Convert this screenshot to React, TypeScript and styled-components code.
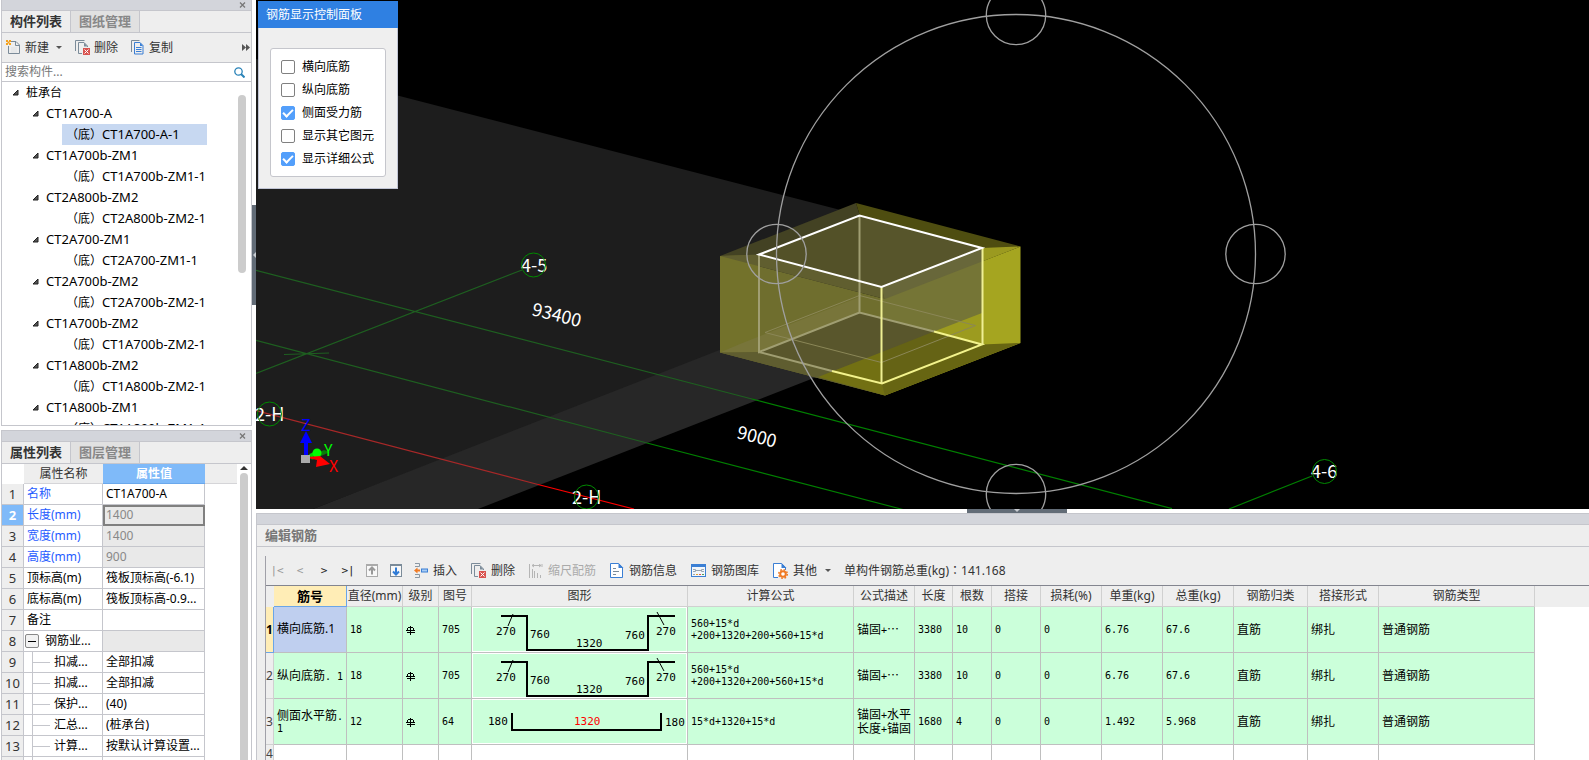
import React, { useState } from "react";
import styled, { createGlobalStyle, css } from "styled-components";

const GlobalStyle = createGlobalStyle`
  * { box-sizing: border-box; }
  html, body, #root { height: 100%; }
  body {
    margin: 0;
    overflow: hidden;
    background: #fff;
    color: #000;
    font: 12px/20px "Noto Sans", "Noto Sans CJK SC", sans-serif;
  }
  button, input { font: inherit; color: inherit; }
  button { border: 0; padding: 0; background: none; white-space: nowrap; }
  svg { display: block; flex: none; }
  table { border-collapse: separate; border-spacing: 0; table-layout: fixed; }
  td, th { padding: 0; font-weight: 400; }
`;

const line = "#c5c6cc";

/* ---------- page frame ---------- */

const Page = styled.div`
  height: 100vh;
  display: flex;
`;

const Sidebar = styled.div`
  flex: none;
  width: 252px;
  padding-left: 1px;
  display: flex;
  flex-direction: column;
  gap: 4px;
`;

const Main = styled.div`
  flex: 1;
  min-width: 0;
  display: flex;
  flex-direction: column;
`;

const ViewRow = styled.div`
  flex: 1;
  min-height: 0;
  display: flex;
`;

const VSplitter = styled.div`
  flex: none;
  width: 4px;
  display: flex;
  flex-direction: column;
  justify-content: center;
`;

const VHandle = styled.div`
  height: 100px;
  background: #626c77;
  display: flex;
  align-items: center;
`;

const HSplitter = styled.div`
  flex: none;
  height: 4px;
  margin-left: 4px;
  display: grid;
  grid-template-columns: 15fr 100px 11fr;
`;

const HHandle = styled.div`
  grid-column: 2;
  background: #626c77;
  display: flex;
  justify-content: center;
`;

/* ---------- docked panels ---------- */

const Panel = styled.section<{ $grow?: boolean }>`
  flex: ${(p) => (p.$grow ? "1" : "none")};
  height: ${(p) => (p.$grow ? "auto" : "330px")};
  min-height: 0;
  border: 1px solid ${line};
  border-top-width: ${(p) => (p.$grow ? "0" : "1px")};
  border-bottom-width: ${(p) => (p.$grow ? "1px" : "0")};
  display: flex;
  flex-direction: column;
`;

const TitleBar = styled.div`
  flex: none;
  height: 11px;
  background: #d3d5db;
  border-bottom: 1px solid ${line};
  display: flex;
  align-items: center;
  justify-content: flex-end;
  padding-right: 5px;
`;

const TabBar = styled.div`
  flex: none;
  height: 22px;
  background: #eee;
  border-bottom: 1px solid ${line};
  display: flex;
`;

const Tab = styled.button<{ $active?: boolean }>`
  width: 69px;
  padding-bottom: 2px;
  border-right: 1px solid ${line};
  background: ${(p) => (p.$active ? "#eee" : "#e1e1e1")};
  color: ${(p) => (p.$active ? "#333" : "#888")};
  font-size: 13px;
  font-weight: 700;
`;

const PanelTools = styled.div`
  flex: none;
  height: 30px;
  padding: 0 1px 0 4px;
  background: #eee;
  border-bottom: 1px solid ${line};
  display: flex;
  align-items: center;
  gap: 13px;
`;

const ToolButton = styled.button<{ $muted?: boolean; $tight?: boolean }>`
  display: flex;
  align-items: center;
  gap: ${(p) => (p.$tight ? 4 : 5)}px;
  color: ${(p) => (p.$muted ? "#aaa" : "#333")};
`;

const Caret = styled.span`
  margin-left: 3px;
  border: 3px solid transparent;
  border-top-color: #555;
  border-bottom-width: 0;
`;

const MoreButton = styled(ToolButton)`
  margin-left: auto;
`;

const SearchRow = styled.label`
  flex: none;
  height: 19px;
  padding: 0 6px 0 3px;
  border-bottom: 1px solid ${line};
  display: flex;
  align-items: center;
`;

const SearchInput = styled.input`
  flex: 1;
  min-width: 0;
  height: 18px;
  padding: 0;
  border: 0;
  outline: 0;
  background: transparent;
  &::placeholder { color: #777; opacity: 1; }
`;

const TreeArea = styled.div`
  flex: 1;
  min-height: 0;
  display: flex;
  overflow: hidden;
`;

const Tree = styled.ul`
  flex: 1;
  margin: 0;
  padding: 0;
  list-style: none;
`;

const TreeRow = styled.li<{ $level: number }>`
  height: 21px;
  line-height: 21px;
  font-size: ${(p) => (p.$level === 0 ? 12 : 13)}px;
  display: flex;
  align-items: center;
  padding-left: ${(p) => [10, 30, 60][p.$level]}px;
  gap: 6px;
  white-space: nowrap;
`;

const Leaf = styled.span<{ $selected?: boolean }>`
  width: 145px;
  height: 21px;
  line-height: 19px;
  padding-left: 4px;
  background: ${(p) => (p.$selected ? "#c7d8f1" : "transparent")};
`;

const TreeTrack = styled.div`
  flex: none;
  width: 13px;
  padding-top: 13px;
`;

const TreeThumb = styled.div`
  width: 8px;
  height: 178px;
  border-radius: 4px;
  background: #ccc;
`;

/* ---------- property table ---------- */

const PropArea = styled.div`
  flex: 1;
  min-height: 0;
  display: flex;
  overflow: hidden;
`;

const PropTable = styled.table`
  width: 235px;
  flex: none;
  align-self: flex-start;
`;

const PropHead = styled.th<{ $selected?: boolean; $blank?: boolean }>`
  height: 20px;
  line-height: 19px;
  font-size: 12px;
  background: ${(p) => (p.$selected ? "#7fbaf9" : p.$blank ? "#fff" : "#eee")};
  color: ${(p) => (p.$selected ? "#fff" : "#333")};
  font-weight: ${(p) => (p.$selected ? 700 : 400)};
  border-bottom: 1px solid ${(p) => (p.$selected ? "#6aa8ec" : p.$blank ? "#fff" : "#d5d5d8")};
`;

const PropNumber = styled.th<{ $selected?: boolean }>`
  height: 21px;
  line-height: 20px;
  font-size: 13px;
  background: ${(p) => (p.$selected ? "#7fbaf9" : "#eee")};
  color: ${(p) => (p.$selected ? "#fff" : "#333")};
  font-weight: ${(p) => (p.$selected ? 700 : 400)};
  border-right: 1px solid ${line};
  border-bottom: 1px solid ${line};
`;

const PropCell = styled.td<{ $color?: string; $fill?: string; $focus?: boolean }>`
  height: 21px;
  line-height: 20px;
  padding-left: 3px;
  color: ${(p) => p.$color ?? "#000"};
  background: ${(p) => p.$fill ?? "#fff"};
  border-right: 1px solid ${line};
  border-bottom: 1px solid ${line};
  white-space: nowrap;
  overflow: hidden;
  ${(p) => p.$focus && css`outline: 2px solid #808080; outline-offset: -2px;`}
`;

const PropLabel = styled.div`
  display: flex;
  align-items: center;
  gap: 4px;
  height: 20px;
`;

const Expander = styled.button`
  width: 14px;
  height: 14px;
  margin-left: -2px;
  margin-right: 2px;
  border: 1px solid #888;
  border-radius: 2px;
  background: #f2f2f2;
  display: flex;
  align-items: center;
  justify-content: center;
  &::after { content: ""; width: 8px; height: 1px; background: #000; }
`;

const Guide = styled.span`
  width: 18px;
  height: 20px;
  margin-left: 5px;
  border-left: 1px solid ${line};
  display: flex;
  align-items: center;
  &::after { content: ""; flex: 1; height: 1px; background: ${line}; }
`;

const PropTrack = styled.div`
  flex: 1;
  padding: 2px 0 0 2px;
  display: flex;
  flex-direction: column;
  gap: 3px;
`;

const PropThumb = styled.div`
  flex: 1;
  width: 8px;
  margin-left: 1px;
  border-radius: 4px 4px 0 0;
  background: #ccc;
`;

/* ---------- 3D view ---------- */

const Viewport = styled.div`
  flex: 1;
  min-width: 0;
  position: relative;
  background: #000;
  overflow: hidden;
`;

const Scene = styled.svg`
  width: 100%;
  height: 100%;
`;

const Dialog = styled.form`
  position: absolute;
  left: 2px;
  top: 1px;
  width: 140px;
  background: #efefef;
  border: 1px solid #c0c4d4;
  border-top: 0;
`;

const DialogTitle = styled.div`
  height: 27px;
  margin: 0 -1px;
  padding-left: 8px;
  line-height: 27px;
  color: #fff;
  background: #2f80e2;
`;

const CheckGroup = styled.div`
  margin: 20px 11px 11px;
  padding: 6px 0 6px 10px;
  background: #fff;
  border: 1px solid ${line};
  border-radius: 3px;
`;

const CheckRow = styled.label`
  height: 23px;
  display: flex;
  align-items: center;
  gap: 7px;
`;

const Check = styled.input`
  appearance: none;
  width: 14px;
  height: 14px;
  margin: 0;
  border: 1px solid #808080;
  border-radius: 2px;
  background: #fff;
  display: grid;
  place-items: center;
  &:checked { background: #539ffb; border-color: #539ffb; }
  &:checked::after {
    content: "";
    width: 8px;
    height: 4px;
    border-left: 2px solid #fff;
    border-bottom: 2px solid #fff;
    transform: translateY(-1px) rotate(-45deg);
  }
`;

/* ---------- rebar editor ---------- */

const Editor = styled.section`
  flex: none;
  height: 247px;
  margin-left: 4px;
  border-top: 1px solid ${line};
  border-left: 1px solid ${line};
  background: #eee;
  display: flex;
  flex-direction: column;
  overflow: hidden;
`;

const EditorTitle = styled.h2`
  flex: none;
  height: 22px;
  margin: 0;
  padding-left: 8px;
  border-bottom: 1px solid ${line};
  font-size: 13px;
  line-height: 20px;
  font-weight: 700;
  color: #777;
`;

const EditorBody = styled.div`
  flex: 1;
  min-height: 0;
  margin: 9px 0 0 8px;
  border-left: 1px solid #a0a0a8;
`;

const EditorTools = styled.div`
  height: 29px;
  display: flex;
  align-items: center;
  gap: 14px;
  color: #333;
`;

const NavGroup = styled.div`
  display: flex;
  width: 134px;
`;

const NavButton = styled.button<{ $muted?: boolean }>`
  flex: none;
  width: 24px;
  height: 20px;
  font: 11px/20px "DejaVu Sans Mono", monospace;
  color: ${(p) => (p.$muted ? "#999" : "#222")};
  display: flex;
  align-items: center;
  justify-content: center;
  &:first-child { width: 22px; }
`;

const Total = styled.span`
  margin-left: -1px;
`;

const Colon = styled.span`
  font-family: "Noto Sans CJK TC", sans-serif;
`;

const Sheet = styled.table`
  width: 100%;
  border-top: 1px solid #83858f;
  background: #fff;
`;

const SheetHead = styled.th<{ $selected?: boolean; $plain?: boolean }>`
  height: 21px;
  line-height: 20px;
  white-space: nowrap;
  background: ${(p) => (p.$selected ? "#ffedb6" : "#eee")};
  color: ${(p) => (p.$selected ? "#000" : "#333")};
  font-size: ${(p) => (p.$selected ? 13 : 12)}px;
  font-weight: ${(p) => (p.$selected ? 700 : 400)};
  border-bottom: 1px solid ${(p) => (p.$selected ? "#6aa5e8" : p.$plain ? "#eee" : "#d0d0d0")};
  border-right: 1px solid ${(p) => (p.$selected ? "#6aa5e8" : p.$plain ? "#eee" : "#d0d0d0")};
`;

const RowNumber = styled.th<{ $selected?: boolean }>`
  line-height: 18px;
  text-align: left;
  background: ${(p) => (p.$selected ? "#ffedb6" : "#eee")};
  color: ${(p) => (p.$selected ? "#000" : "#444")};
  font-weight: ${(p) => (p.$selected ? 700 : 400)};
  border-right: 1px solid ${(p) => (p.$selected ? "#6aa5e8" : "#d0d0d0")};
  border-bottom: 1px solid ${(p) => (p.$selected ? "#6aa5e8" : "#d0d0d0")};
`;

const SheetCell = styled.td<{ $tone?: "name" | "shape" | "empty" | "filler" }>`
  height: ${(p) => (p.$tone === "empty" || p.$tone === "filler" ? 18 : 46)}px;
  padding: 0 0 0 3px;
  font: 10px/12px "DejaVu Sans Mono", "Noto Sans CJK SC", monospace;
  background: #cbffda;
  border-right: 1px solid #bfbfbf;
  border-bottom: 1px solid #bfbfbf;
  ${(p) => p.$tone === "name" && css`background: #bfcfef;`}
  ${(p) => p.$tone === "shape" && css`background: #fff; padding: 1px;`}
  ${(p) => p.$tone === "empty" && css`background: #fff;`}
  ${(p) => p.$tone === "filler" && css`background: #fff; border: 0;`}
`;

const Han = styled.span<{ $ui?: boolean }>`
  font-size: 12px;
  font-family: ${(p) => (p.$ui ? '"Noto Sans", ' : "")}"Noto Sans CJK SC", sans-serif;
`;

const ShapeSvg = styled.svg`
  width: 100%;
  height: 43px;
  background: #cbffda;
  font: 11px "DejaVu Sans Mono", monospace;
`;

/* ---------- icons ---------- */

const CloseIcon = () => (
  <svg width="7" height="6" viewBox="0 0 7 6"><path d="M1 .5 6 5.5M6 .5 1 5.5" stroke="#777" strokeWidth="1.3" /></svg>
);

const NewIcon = () => (
  <svg width="15" height="15" viewBox="0 0 15 15" fill="none">
    <path d="M5 1.500h5l3.500 3.500v8.500h-11V6" stroke="#7b8b99" />
    <path d="M9.500 1.500v4h4" stroke="#7b8b99" />
    <path d="M5 8h6M5 10h6M5 12h6" stroke="#dde1e4" />
    <path d="M0 0h2v2H0zM3 0h2v2H3zM1.500 1.500h2v2h-2zM0 3h2v2H0zM3 3h2v2H3z" fill="#f5a21d" />
  </svg>
);

const DeleteIcon = () => (
  <svg width="15" height="15" viewBox="0 0 15 15" fill="none">
    <path d="M.5 11V.5h9" stroke="#7b8b99" />
    <path d="M7 13.500H3.500v-11H9l3.500 3.500v1" stroke="#7b8b99" />
    <path d="M9 2.500v4h3.500z" fill="#7b8b99" />
    <rect x="8" y="8" width="7" height="7" fill="#d9534f" />
    <path d="m9.500 9.500 4 4m0-4-4 4" stroke="#fff" />
  </svg>
);

const CopyIcon = () => (
  <svg width="13" height="15" viewBox="0 0 13 15" fill="none">
    <path d="M.5 12V.5h8" stroke="#7b8b99" />
    <path d="M3.500 2.500H9l3 3v8.500H3.500z" stroke="#3b7fd4" />
    <path d="M9 2.500v3.500h3z" fill="#3b7fd4" />
    <path d="M5 7.500h5.500M5 9.500h5.500M5 11.500h5.500" stroke="#3b7fd4" />
  </svg>
);

const MoreIcon = () => (
  <svg width="8" height="7" viewBox="0 0 8 7" fill="#555"><path d="M0 0 4 3.500 0 7zM4 0l4 3.500L4 7z" /></svg>
);

const SearchIcon = () => (
  <svg width="11" height="11" viewBox="0 0 11 11" fill="none" stroke="#2a83b8">
    <circle cx="4.500" cy="4.500" r="3.700" strokeWidth="1.300" /><path d="m7 7 3.500 3.500" strokeWidth="2" />
  </svg>
);

const Twisty = () => (
  <svg width="8" height="8" viewBox="0 0 8 8"><path d="M6 1v5H1z" fill="#555" stroke="#222" /></svg>
);

const MoveIcon = ({ down }: { down?: boolean }) => (
  <svg width="12" height="13" viewBox="0 0 12 13" fill="none">
    <rect x=".5" y=".5" width="11" height="12" stroke={down ? "#7b8b99" : "#aaa"} fill="#f8f8f8" />
    <path d="M0 1h12" stroke={down ? "#7b8b99" : "#aaa"} strokeWidth="2" />
    <path
      d={down ? "M6 3.500v7M3 7.500l3 3 3-3" : "M6 10.500v-7M3 6.500l3-3 3 3"}
      stroke={down ? "#2f7bd6" : "#999"}
      strokeWidth="2"
    />
  </svg>
);

const InsertIcon = () => (
  <svg width="14" height="15" viewBox="0 0 14 15" fill="none">
    <path d="M1 .5h4.500v3H1M1 11.500h4.500v3H1" stroke="#8a97a3" />
    <path d="m0 7.500 3.500-3v2H6v2H3.500v2z" fill="#f07a24" />
    <rect x="7.500" y="6" width="6" height="3" fill="#a9cdf5" stroke="#3b7fd4" />
  </svg>
);

const ScaleIcon = () => (
  <svg width="14" height="14" viewBox="0 0 14 14" fill="none" stroke="#b5b5b5">
    <path d="M.5 0v14M3 1.500h9M5 0 3 1.500 5 3M10 0l2 1.500L10 3M13 0v3" />
    <path d="M3.500 5v9M5.500 7v7M8.500 9v5M11.500 11v3" />
  </svg>
);

const InfoIcon = () => (
  <svg width="14" height="15" viewBox="0 0 14 15" fill="none">
    <path d="M.5.500h8l4 4v10H.5z" fill="#fff" stroke="#3b7fd4" />
    <path d="M8.500 0v5h5z" fill="#3b7fd4" />
    <path d="M3 5.500h3M3 8.500h6M3 11.500h3" stroke="#7b8b99" />
  </svg>
);

const GalleryIcon = () => (
  <svg width="15" height="13" viewBox="0 0 15 13" fill="none">
    <rect x=".5" y=".5" width="14" height="12" fill="#f2f6fa" stroke="#3b7fd4" />
    <path d="M0 1.500h15" stroke="#3b7fd4" strokeWidth="3" />
    <path d="M2 5.500h2.500v2H2M5 6.500h5M13 5.500h-2.500v2H13" stroke="#9aa5b0" />
    <path d="M2 10.500h2" stroke="#9aa5b0" /><path d="M5 10.500h2" stroke="#e0a030" />
    <path d="M8 10.500h2" stroke="#e05050" /><path d="M11 10.500h2" stroke="#50a050" />
  </svg>
);

const OtherIcon = () => (
  <svg width="15" height="16" viewBox="0 0 15 16" fill="none">
    <path d="M5 14.500H.5V.500h8l4 4V7" fill="#fff" stroke="#3b7fd4" />
    <path d="M8.500 0v5h5z" fill="#3b7fd4" />
    <circle cx="10" cy="11" r="4.300" stroke="#f07a24" strokeWidth="1.500" strokeDasharray="1.700 1.680" />
    <circle cx="10" cy="11" r="2.800" stroke="#f07a24" strokeWidth="2" fill="#fff" />
  </svg>
);

const GradeIcon = () => (
  <svg width="10" height="10" viewBox="0 0 10 10" fill="none" stroke="#000">
    <path d="M4.500 1v9M2 2.500h5M1.500 3v3M7.500 3v3M0 5.500h9M1 7.500h8" />
  </svg>
);

/* ---------- data ---------- */

const components: [string, string][] = [
  ["CT1A700-A", "CT1A700-A-1"],
  ["CT1A700b-ZM1", "CT1A700b-ZM1-1"],
  ["CT2A800b-ZM2", "CT2A800b-ZM2-1"],
  ["CT2A700-ZM1", "CT2A700-ZM1-1"],
  ["CT2A700b-ZM2", "CT2A700b-ZM2-1"],
  ["CT1A700b-ZM2", "CT1A700b-ZM2-1"],
  ["CT1A800b-ZM2", "CT1A800b-ZM2-1"],
  ["CT1A800b-ZM1", "CT1A800b-ZM1-1"],
];

type Prop = { name: string; value: string; kind?: "key" | "locked" | "group" | "child" };

const props: Prop[] = [
  { name: "名称", value: "CT1A700-A", kind: "key" },
  { name: "长度(mm)", value: "1400", kind: "locked" },
  { name: "宽度(mm)", value: "1400", kind: "locked" },
  { name: "高度(mm)", value: "900", kind: "locked" },
  { name: "顶标高(m)", value: "筏板顶标高(-6.1)" },
  { name: "底标高(m)", value: "筏板顶标高-0.9..." },
  { name: "备注", value: "" },
  { name: "钢筋业...", value: "", kind: "group" },
  { name: "扣减...", value: "全部扣减", kind: "child" },
  { name: "扣减...", value: "全部扣减", kind: "child" },
  { name: "保护...", value: "(40)", kind: "child" },
  { name: "汇总...", value: "(桩承台)", kind: "child" },
  { name: "计算...", value: "按默认计算设置...", kind: "child" },
];

const columns: [string, number][] = [
  ["筋号", 73], ["直径(mm)", 56], ["级别", 36], ["图号", 33], ["图形", 216], ["计算公式", 166],
  ["公式描述", 61], ["长度", 38], ["根数", 39], ["搭接", 49], ["损耗(%)", 61], ["单重(kg)", 61],
  ["总重(kg)", 71], ["钢筋归类", 74], ["搭接形式", 71], ["钢筋类型", 156],
];

const HookShape = () => (
  <ShapeSvg viewBox="0 0 213 43" preserveAspectRatio="xMidYMid meet">
    <path d="M28 8h26v34h121V8h27" fill="none" stroke="#000" strokeWidth="2" />
    <path d="m40 6-5 12M184 4l7 13" stroke="#000" />
    <text x="23" y="27">270</text>
    <text x="57" y="30">760</text>
    <text x="103" y="39">1320</text>
    <text x="152" y="31">760</text>
    <text x="183" y="27">270</text>
  </ShapeSvg>
);

const TrayShape = () => (
  <ShapeSvg viewBox="0 0 213 43" preserveAspectRatio="xMidYMid meet">
    <path d="M39 13v17h149V13" fill="none" stroke="#000" strokeWidth="2" />
    <text x="15" y="25">180</text>
    <text x="101" y="25" fill="#f00">1320</text>
    <text x="192" y="26">180</text>
  </ShapeSvg>
);

const rebars = [
  {
    name: <Han $ui>横向底筋.1</Han>, dia: "18", no: "705", shape: <HookShape />,
    formula: <>560+15*d<br />+200+1320+200+560+15*d</>, note: <><Han>锚固</Han>+<Han>…</Han></>,
    len: "3380", count: "10", unit: "6.76", total: "67.6",
  },
  {
    name: <><Han>纵向底筋</Han>. 1</>, dia: "18", no: "705", shape: <HookShape />,
    formula: <>560+15*d<br />+200+1320+200+560+15*d</>, note: <><Han>锚固</Han>+<Han>…</Han></>,
    len: "3380", count: "10", unit: "6.76", total: "67.6",
  },
  {
    name: <><Han>侧面水平筋</Han>.<br />1</>, dia: "12", no: "64", shape: <TrayShape />,
    formula: <>15*d+1320+15*d</>, note: <><Han>锚固</Han>+<Han>水平</Han><br /><Han>长度</Han>+<Han>锚固</Han></>,
    len: "1680", count: "4", unit: "1.492", total: "5.968",
  },
];

/* ---------- parts ---------- */

const ComponentPanel = () => (
  <Panel $grow>
    <TitleBar><CloseIcon /></TitleBar>
    <TabBar>
      <Tab $active>构件列表</Tab>
      <Tab>图纸管理</Tab>
    </TabBar>
    <PanelTools>
      <ToolButton $tight><NewIcon />新建<Caret /></ToolButton>
      <ToolButton $tight><DeleteIcon />删除</ToolButton>
      <ToolButton><CopyIcon />复制</ToolButton>
      <MoreButton aria-label="更多"><MoreIcon /></MoreButton>
    </PanelTools>
    <SearchRow>
      <SearchInput placeholder="搜索构件..." aria-label="搜索构件" />
      <SearchIcon />
    </SearchRow>
    <TreeArea>
      <Tree>
        <TreeRow $level={0}><Twisty />桩承台</TreeRow>
        {components.map(([parent, leaf], i) => (
          <React.Fragment key={leaf}>
            <TreeRow $level={1}><Twisty />{parent}</TreeRow>
            <TreeRow $level={2}>
              <Leaf $selected={i === 0}><Han>（底）</Han>{leaf}</Leaf>
            </TreeRow>
          </React.Fragment>
        ))}
      </Tree>
      <TreeTrack><TreeThumb /></TreeTrack>
    </TreeArea>
  </Panel>
);

const PropertyPanel = () => (
  <Panel>
    <TitleBar><CloseIcon /></TitleBar>
    <TabBar>
      <Tab $active>属性列表</Tab>
      <Tab>图层管理</Tab>
    </TabBar>
    <PropArea>
      <PropTable>
        <colgroup>
          <col width="22" /><col width="79" /><col width="102" /><col width="32" />
        </colgroup>
        <thead>
          <tr>
            <PropHead $blank />
            <PropHead>属性名称</PropHead>
            <PropHead $selected>属性值</PropHead>
            <PropHead />
          </tr>
        </thead>
        <tbody>
          {props.map((p, i) => (
            <tr key={i}>
              <PropNumber $selected={i === 1}>{i + 1}</PropNumber>
              <PropCell $color={p.kind === "key" || p.kind === "locked" ? "#1f5cff" : undefined}>
                <PropLabel>
                  {p.kind === "group" && <Expander aria-label="折叠" />}
                  {p.kind === "child" && <Guide />}
                  {p.name}
                </PropLabel>
              </PropCell>
              <PropCell
                $color={p.kind === "locked" ? "#888" : undefined}
                $fill={p.kind === "locked" || p.kind === "group" ? "#e9e9e9" : undefined}
                $focus={i === 1}
              >
                {p.value}
              </PropCell>
            </tr>
          ))}
          <tr>
            <PropNumber />
            <PropCell><PropLabel><Guide /></PropLabel></PropCell>
            <PropCell />
          </tr>
        </tbody>
      </PropTable>
      <PropTrack>
        <svg width="10" height="4" viewBox="0 0 10 4"><path d="M1 4 5 0l4 4z" fill="#333" /></svg>
        <PropThumb />
      </PropTrack>
    </PropArea>
  </Panel>
);

const checks: [string, boolean][] = [
  ["横向底筋", false], ["纵向底筋", false], ["侧面受力筋", true], ["显示其它图元", false], ["显示详细公式", true],
];

const DisplayDialog = () => {
  const [state, setState] = useState(checks.map((c) => c[1]));
  return (
    <Dialog>
      <DialogTitle>钢筋显示控制面板</DialogTitle>
      <CheckGroup>
        {checks.map(([label], i) => (
          <CheckRow key={label}>
            <Check
              type="checkbox"
              checked={state[i]}
              onChange={() => setState(state.map((v, j) => (j === i ? !v : v)))}
            />
            {label}
          </CheckRow>
        ))}
      </CheckGroup>
    </Dialog>
  );
};

const ModelScene = () => (
  <Scene viewBox="256 0 1333 509" preserveAspectRatio="xMinYMin slice" fill="none">
    {/* slab planes */}
    <path d="M256 59 856 214V300L313 509H256z" fill="#1d1d1d" />
    <path d="M313 509 740 342 860 360 478 509z" fill="#272727" />

    {/* axis grid */}
    <g stroke="#1e5f20" strokeWidth="1.200">
      <path d="M256 270.300 752 399M256 340.300 647 443M256 373.500 522 270M284 354.500 329 353" />
      <path d="M752 399 1172 508.600M647 443 903 509.500M1229 509 1312 476" stroke="#008000" />
    </g>
    <path d="M256 410.700 538 484.500" stroke="#a82828" strokeWidth="1.200" />
    <path d="M538 484.500 634 509" stroke="#f00" strokeWidth="1.200" />

    {/* foundation volume */}
    <path d="M720 256 856 203 860 216 885 299z" fill="#434223" />
    <path d="M856 203 1020.500 246.500 885 299 860 216z" fill="#4e4d10" />
    <path d="M720 256 885 299V395.500L720 352.500z" fill="#6f6e2e" />
    <path d="M720 256 759 255V352L720 352.500z" fill="#73722b" />
    <path d="M885 299 1020.500 246.500V343L885 395.500z" fill="#a5a520" />
    <path d="M882 287 982 248V344L882 383z" fill="#757536" />
    <path d="M759 254.500 859.500 215.500 982 248 882 287z" fill="#535128" />
    <path d="M859.500 215.500 982 248 882 287 859.500 281z" fill="#57552b" />
    <path d="M720 256 759 254.500 882 287 885 299z" fill="#605e2f" />
    <path d="M882 287 982 248V261.500L885 299z" fill="#68673a" />
    <path d="M982 248 1020.500 246.500 982 261.500z" fill="#9b9a20" />
    <path d="M720 352.500 740 344 859.500 297 859.500 313 759 352z" fill="#78753a" />
    <path d="M759 352 859.500 312.500 982 344.500 882 383.500z" fill="#59562c" />
    <path d="M720 352.500 759 352 882 383.500 885 395.500z" fill="#5f5d30" />
    <path d="M934 331.500 982 313V344z" fill="#9c9b1f" />
    <path d="M818 377 882 352V383.500L885 395.500z" fill="#727013" />
    <path d="M882 352 934 331.500 982 344.500 882 383.500z" fill="#656315" />
    <path d="M882 383.500 982 344.500 1020.500 343 885 395.500z" fill="#676512" />
    <path d="M765 332.500 859.500 295.500 975.500 325.500 881.500 362.500z" stroke="#8b8757" />
    <g strokeWidth="2">
      <path d="M859.500 215.500V312.500M759 254.500V352L859.500 312.500 934 331.500M759 352 832 371" stroke="#a09e72" />
      <path d="M832 371 882 383.500 982 344.500 934 331.500" stroke="#f3f38c" />
      <path d="M881.500 287V383.500M982.500 248V344.500" stroke="#efef94" />
      <path d="M759 254.500 859.500 215.500 982 248 881.500 287z" stroke="#fff" />
    </g>

    {/* orbit rings */}
    <g stroke="#a0a0a0" strokeWidth="1.300">
      <circle cx="1016" cy="254" r="239.500" />
      <circle cx="776.500" cy="254" r="29.700" /><circle cx="1255.500" cy="254" r="29.700" />
      <circle cx="1016" cy="15" r="29.700" /><circle cx="1016" cy="494" r="29.700" />
    </g>

    {/* labels */}
    <g fill="#fff" fontFamily='"Noto Sans CJK SC", sans-serif' fontSize="18">
      <text x="521" y="272">4-5</text>
      <text x="255" y="421">2-H</text>
      <text x="572" y="504">2-H</text>
      <text x="1311" y="478">4-6</text>
      <text transform="translate(531 315) rotate(14)">93400</text>
      <text transform="translate(736 438) rotate(14)">9000</text>
    </g>
    <g stroke="#008a00">
      <circle cx="533.500" cy="265" r="12" /><circle cx="269.500" cy="414" r="12" />
      <circle cx="586.500" cy="497" r="12" /><circle cx="1324.500" cy="471.500" r="12" />
    </g>

    {/* axis tripod */}
    <path d="M306 456V440" stroke="#00f" strokeWidth="4" />
    <path d="M300 443 306 431 312 443z" fill="#00f" />
    <path d="M309 457 312 460 330 452 324 450z" fill="#0a7a0a" />
    <path d="M310 456 316 453" stroke="#0d0" strokeWidth="4" />
    <circle cx="317" cy="453" r="4.500" fill="#0f0" />
    <path d="M308 458 317 460 316 467 330 464 320 456 308 457z" fill="#f00" />
    <path d="M301 455h9v8h-9z" fill="#aaa" />
    <g fontFamily='"Noto Sans CJK SC", sans-serif' fontSize="16">
      <text x="301" y="431" fill="#00f">Z</text>
      <text x="324" y="456" fill="#0f0">Y</text>
      <text x="329" y="472" fill="#f00">X</text>
    </g>
  </Scene>
);

const RebarTable = () => (
  <Sheet>
    <colgroup>
      <col width="8" />
      {columns.map(([c, w]) => <col key={c} width={w} />)}
      <col />
    </colgroup>
    <thead>
      <tr>
        <SheetHead $plain />
        {columns.map(([c], i) => <SheetHead key={c} $selected={i === 0}>{c}</SheetHead>)}
        <SheetHead $plain />
      </tr>
    </thead>
    <tbody>
      {rebars.map((r, i) => (
        <tr key={i}>
          <RowNumber $selected={i === 0}>{i + 1}</RowNumber>
          <SheetCell $tone={i === 0 ? "name" : undefined}>{r.name}</SheetCell>
          <SheetCell>{r.dia}</SheetCell>
          <SheetCell><GradeIcon /></SheetCell>
          <SheetCell>{r.no}</SheetCell>
          <SheetCell $tone="shape">{r.shape}</SheetCell>
          <SheetCell>{r.formula}</SheetCell>
          <SheetCell>{r.note}</SheetCell>
          <SheetCell>{r.len}</SheetCell>
          <SheetCell>{r.count}</SheetCell>
          <SheetCell>0</SheetCell>
          <SheetCell>0</SheetCell>
          <SheetCell>{r.unit}</SheetCell>
          <SheetCell>{r.total}</SheetCell>
          <SheetCell><Han>直筋</Han></SheetCell>
          <SheetCell><Han>绑扎</Han></SheetCell>
          <SheetCell><Han>普通钢筋</Han></SheetCell>
          <SheetCell $tone="filler" />
        </tr>
      ))}
      <tr>
        <RowNumber>4</RowNumber>
        {columns.map(([c]) => <SheetCell key={c} $tone="empty" />)}
        <SheetCell $tone="filler" />
      </tr>
    </tbody>
  </Sheet>
);

const RebarEditor = () => (
  <Editor>
    <TitleBar />
    <EditorTitle>编辑钢筋</EditorTitle>
    <EditorBody>
      <EditorTools>
        <NavGroup>
          <NavButton $muted>|&lt;</NavButton>
          <NavButton $muted>&lt;</NavButton>
          <NavButton>&gt;</NavButton>
          <NavButton>&gt;|</NavButton>
          <NavButton aria-label="上移"><MoveIcon /></NavButton>
          <NavButton aria-label="下移"><MoveIcon down /></NavButton>
        </NavGroup>
        <ToolButton><InsertIcon />插入</ToolButton>
        <ToolButton><DeleteIcon />删除</ToolButton>
        <ToolButton $muted><ScaleIcon />缩尺配筋</ToolButton>
        <ToolButton><InfoIcon />钢筋信息</ToolButton>
        <ToolButton><GalleryIcon />钢筋图库</ToolButton>
        <ToolButton><OtherIcon />其他<Caret /></ToolButton>
        <Total>单构件钢筋总重(kg)<Colon>：</Colon>141.168</Total>
      </EditorTools>
      <RebarTable />
    </EditorBody>
  </Editor>
);

export default function App() {
  return (
    <Page>
      <GlobalStyle />
      <Sidebar>
        <ComponentPanel />
        <PropertyPanel />
      </Sidebar>
      <Main>
        <ViewRow>
          <VSplitter>
            <VHandle>
              <svg width="4" height="6" viewBox="0 0 4 6"><path d="M4 0v6L1 3z" fill="#c8ccd2" /></svg>
            </VHandle>
          </VSplitter>
          <Viewport>
            <ModelScene />
            <DisplayDialog />
          </Viewport>
        </ViewRow>
        <HSplitter>
          <HHandle>
            <svg width="6" height="3" viewBox="0 0 6 3"><path d="M0 0h6L3 3z" fill="#c8ccd2" /></svg>
          </HHandle>
        </HSplitter>
        <RebarEditor />
      </Main>
    </Page>
  );
}
